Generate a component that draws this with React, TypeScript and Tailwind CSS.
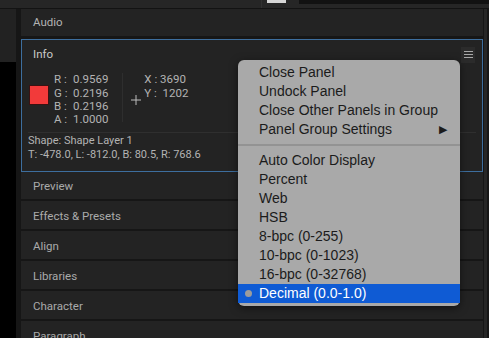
const menuTop = [
  { label: "Close Panel" },
  { label: "Undock Panel" },
  { label: "Close Other Panels in Group" },
  { label: "Panel Group Settings", submenu: true },
];

const menuBottom = [
  "Auto Color Display",
  "Percent",
  "Web",
  "HSB",
  "8-bpc (0-255)",
  "10-bpc (0-1023)",
  "16-bpc (0-32768)",
];

const rows = ["Preview", "Effects & Presets", "Align", "Libraries", "Character", "Paragraph"];

const channels = [
  ["R", "0.9569"],
  ["G", "0.2196"],
  ["B", "0.2196"],
  ["A", "1.0000"],
];

function Hamburger() {
  return (
    <div className="flex h-[16px] w-[14px] flex-col items-center justify-center gap-[2px] bg-[#2b2b2b]">
      <span className="h-px w-[9px] bg-[#a8a8a8]" />
      <span className="h-px w-[9px] bg-[#a8a8a8]" />
      <span className="h-px w-[9px] bg-[#a8a8a8]" />
    </div>
  );
}

function InfoPanel() {
  return (
    <div className="h-[133px] shrink-0 border border-[#3d6e9e] bg-[#232323]">
      <div className="flex items-center justify-between pl-[11px] pr-[7px] pt-[6px]">
        <span className="text-[11.5px] text-[#c9c9c9]">Info</span>
        <Hamburger />
      </div>

      <div className="mt-[10px] flex items-start pl-[7px]">
        {/* swatch */}
        <div className="mt-[12px] h-[20px] w-[20px] shrink-0 border border-[#3a1212] bg-[#f23a3a]" />

        <div className="ml-[5px] grid grid-cols-[16px_auto] gap-x-[3px] text-[11.5px] leading-[13.3px] text-[#b3b3b3]">
          {channels.map(([k, v]) => (
            <div key={k} className="contents">
              <span className="whitespace-nowrap">{k} :</span>
              <span>{v}</span>
            </div>
          ))}
        </div>

        <div className="ml-[14px] h-[49px] w-px bg-[#2e2e2e]" />

        <div className="relative ml-[21px] text-[11.5px] leading-[13.3px] text-[#b3b3b3]">
          <div className="whitespace-nowrap">X : 3690</div>
          <div className="whitespace-nowrap">Y :&nbsp; 1202</div>
          <svg className="absolute left-[-13px] top-[22px]" width="10" height="10" viewBox="0 0 10 10">
            <path d="M5 0V10M0 5H10" stroke="#bdbdbd" strokeWidth="1" />
          </svg>
        </div>
      </div>

      <div className="mx-[6px] mt-[6px] h-px bg-[#2f2f2f]" />

      <div className="pl-[6px] pt-[1px] text-[11px] leading-[14px] text-[#b3b3b3]">
        <div>Shape: Shape Layer 1</div>
        <div>T: -478.0, L: -812.0, B: 80.5, R: 768.6</div>
      </div>
    </div>
  );
}

function PanelMenu() {
  return (
    <div className="absolute left-[238px] top-[60px] w-[222px] rounded-[6px] bg-[#a9a9a9] py-[3px] text-[14px] leading-[19px] text-[#1b1b1b] shadow-[0_2px_8px_rgba(0,0,0,0.5)] [font-family:'Liberation_Sans',Arial,sans-serif]">
      {menuTop.map((item) => (
        <div key={item.label} className="flex h-[19px] items-center justify-between pl-[21px] pr-[13px]">
          <span>{item.label}</span>
          {item.submenu && <span className="text-[11px]">▶</span>}
        </div>
      ))}
      <div className="my-[5px] h-[2px] bg-[#939393]" />
      {menuBottom.map((label) => (
        <div key={label} className="flex h-[19px] items-center pl-[21px]">
          {label}
        </div>
      ))}
      <div className="relative flex h-[19px] items-center bg-[#0f5bd4] pl-[21px] text-white">
        <span className="absolute left-[7px] top-[6px] h-[7px] w-[7px] rounded-full bg-[#9c9c9c]" />
        Decimal (0.0-1.0)
      </div>
    </div>
  );
}

export default function App() {
  return (
    <div className="relative h-[338px] w-[489px] overflow-hidden bg-[#161616] [font-family:Roboto,sans-serif]">
      {/* top strip */}
      <div className="flex h-[9px] border-b border-[#131313] bg-[#262626]">
        <div className="ml-[261px] h-full w-px bg-[#303030]" />
        <div className="ml-[5px] h-[3px] w-[19px] bg-[#d6d6d6]" />
        <div className="ml-[13px] h-[4px] flex-1 bg-[#121212]" />
      </div>

      <div className="flex h-[329px]">
        {/* left column */}
        <div className="flex w-[16px] flex-col">
          <div className="h-[53px] bg-[#222222]" />
          <div className="flex-1 bg-black" />
        </div>

        {/* panels */}
        <div className="ml-[5px] flex w-[462px] flex-col">
          <div className="flex h-[27px] shrink-0 items-center bg-[#232323] pl-[12px] pt-[1px] text-[11.5px] text-[#b3b3b3]">Audio</div>
          <div className="h-[3px] shrink-0" />
          <InfoPanel />
          {rows.map((r, i) => (
            <div
              key={r}
              className={`flex shrink-0 items-center bg-[#232323] pl-[12px] pt-[3px] text-[11.5px] text-[#aaaaaa] ${i === 0 ? "h-[27px]" : "mt-[2px] h-[28px]"}`}
            >
              {r}
            </div>
          ))}
        </div>

        <div className="ml-[1px] w-[3px] bg-[#262626]" />
      </div>

      <PanelMenu />
    </div>
  );
}
